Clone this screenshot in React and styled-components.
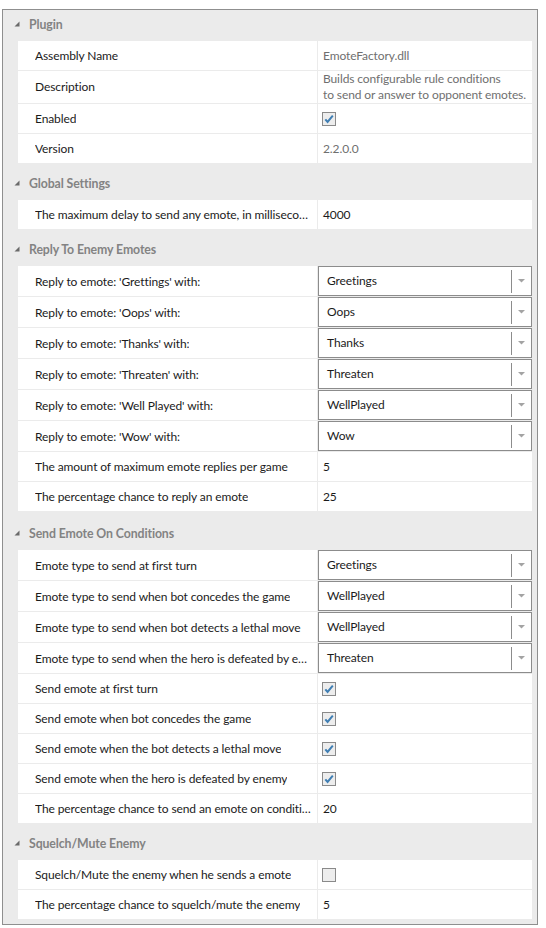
import React from "react";
import styled, { createGlobalStyle } from "styled-components";

const Global = createGlobalStyle`
  html, body { margin: 0; padding: 0; background: #ffffff; }
  body {
    font-family: "Segoe UI", Lato, "Noto Sans", sans-serif;
    font-size: 12px;
    letter-spacing: -0.1px;
  }
`;

const Panel = styled.div`
  box-sizing: border-box;
  margin: 9px 0 0 2px;
  width: 536px;
  border: 1px solid #8f8f8f;
  background: #ebebeb;
  padding-bottom: 5px;
  display: flex;
  flex-direction: column;
`;

const Category = styled.section`
  display: flex;
  flex-direction: column;
  margin-top: ${(p) => p.$gap}px;
`;

const Header = styled.div`
  height: 31px;
  display: flex;
  align-items: center;
  padding-bottom: 3px;
  box-sizing: border-box;
  padding-left: 11px;
  gap: 9px;
  color: #838383;
  font-weight: bold;
  font-size: 12.3px;
`;

const Items = styled.div`
  margin-left: 15px;
  width: 514px;
  display: flex;
  flex-direction: column;
  gap: 1px;
  background: #ebebeb;
`;

const Row = styled.div`
  display: grid;
  grid-template-columns: 299px 214px;
  column-gap: 1px;
  height: ${(p) => p.$h}px;
  background: #ebebeb;
`;

const NameCell = styled.div`
  background: #ffffff;
  color: #1b1b1b;
  padding: 0 4px 0 17px;
  display: flex;
  align-items: ${(p) => (p.$top ? "flex-start" : "center")};
  padding-top: ${(p) => (p.$top ? "8px" : "0")};
  box-sizing: border-box;
  min-width: 0;
  overflow: hidden;
`;

const NameText = styled.span`
  white-space: nowrap;
  overflow: hidden;
  text-overflow: ellipsis;
`;

const ValueCell = styled.div`
  background: #ffffff;
  color: ${(p) => (p.$readOnly ? "#6f6f6f" : "#1b1b1b")};
  padding-left: ${(p) => p.$pad}px;
  display: flex;
  flex-direction: column;
  justify-content: ${(p) => (p.$top ? "flex-start" : "center")};
  line-height: 16px;
  box-sizing: border-box;
  min-width: 0;
  white-space: nowrap;
`;

const Combo = styled.div`
  box-sizing: border-box;
  height: 100%;
  width: 100%;
  border: 1px solid #8c8c8c;
  display: flex;
  align-items: center;
  background: #ffffff;
  color: #1b1b1b;
`;

const ComboText = styled.span`
  flex: 1;
  padding-left: 8px;
`;

const ComboDivider = styled.div`
  align-self: stretch;
  margin: 3px 0 2px;
  width: 1px;
  background: #8c8c8c;
`;

const ComboArrow = styled.div`
  width: 19px;
  display: flex;
  justify-content: center;
  align-items: center;
`;

const Box = styled.div`
  box-sizing: border-box;
  width: 14px;
  height: 14px;
  border: 1px solid #8a8a8a;
  background: #ededed;
  display: flex;
  align-items: center;
  justify-content: center;
`;

const Expander = () => (
  <svg width="6" height="6" viewBox="0 0 6 6">
    <polygon points="5.5,0.5 5.5,5.5 0.5,5.5" fill="#6a6a6a" />
  </svg>
);

const Arrow = () => (
  <svg width="7" height="4" viewBox="0 0 7 4">
    <polygon points="0,0 7,0 3.5,3.5" fill="#a3a3a3" />
  </svg>
);

const Check = ({ checked }) => (
  <Box>
    {checked && (
      <svg width="12" height="12" viewBox="0 0 12 12">
        <polyline
          points="2.3,6.3 4.6,9 9.8,2.6"
          fill="none"
          stroke="#3f7eb3"
          strokeWidth="2"
        />
      </svg>
    )}
  </Box>
);

const data = [
  {
    title: "Plugin",
    gap: 0,
    items: [
      { name: "Assembly Name", type: "text", value: "EmoteFactory.dll", ro: true },
      {
        name: "Description",
        type: "multi",
        value: ["Builds configurable rule conditions", "to send or answer to opponent emotes."],
        ro: true,
      },
      { name: "Enabled", type: "check", value: true },
      { name: "Version", type: "text", value: "2.2.0.0", ro: true },
    ],
  },
  {
    title: "Global Settings",
    gap: 6,
    items: [
      { name: "The maximum delay to send any emote, in milliseconds", type: "text", value: "4000" },
    ],
  },
  {
    title: "Reply To Enemy Emotes",
    gap: 6,
    items: [
      { name: "Reply to emote: 'Grettings' with:", type: "combo", value: "Greetings" },
      { name: "Reply to emote: 'Oops' with:", type: "combo", value: "Oops" },
      { name: "Reply to emote: 'Thanks' with:", type: "combo", value: "Thanks" },
      { name: "Reply to emote: 'Threaten' with:", type: "combo", value: "Threaten" },
      { name: "Reply to emote: 'Well Played' with:", type: "combo", value: "WellPlayed" },
      { name: "Reply to emote: 'Wow' with:", type: "combo", value: "Wow" },
      { name: "The amount of maximum emote replies per game", type: "text", value: "5" },
      { name: "The percentage chance to reply an emote", type: "text", value: "25" },
    ],
  },
  {
    title: "Send Emote On Conditions",
    gap: 8,
    items: [
      { name: "Emote type to send at first turn", type: "combo", value: "Greetings" },
      { name: "Emote type to send when bot concedes the game", type: "combo", value: "WellPlayed" },
      { name: "Emote type to send when bot detects a lethal move", type: "combo", value: "WellPlayed" },
      { name: "Emote type to send when the hero is defeated by enemy", type: "combo", value: "Threaten" },
      { name: "Send emote at first turn", type: "check", value: true },
      { name: "Send emote when bot concedes the game", type: "check", value: true },
      { name: "Send emote when the bot detects a lethal move", type: "check", value: true },
      { name: "Send emote when the hero is defeated by enemy", type: "check", value: true },
      { name: "The percentage chance to send an emote on conditions", type: "text", value: "20" },
    ],
  },
  {
    title: "Squelch/Mute Enemy",
    gap: 6,
    items: [
      { name: "Squelch/Mute the enemy when he sends a emote", type: "check", value: false },
      { name: "The percentage chance to squelch/mute the enemy", type: "text", value: "5" },
    ],
  },
];

const heights = { text: 29, multi: 32, check: 29, combo: 30 };

const Value = ({ item }) => {
  if (item.type === "combo")
    return (
      <ValueCell $pad={0}>
        <Combo>
          <ComboText>{item.value}</ComboText>
          <ComboDivider />
          <ComboArrow>
            <Arrow />
          </ComboArrow>
        </Combo>
      </ValueCell>
    );
  if (item.type === "check")
    return (
      <ValueCell $pad={4}>
        <Check checked={item.value} />
      </ValueCell>
    );
  if (item.type === "multi")
    return (
      <ValueCell $pad={5} $readOnly $top>
        {item.value.map((l) => (
          <span key={l}>{l}</span>
        ))}
      </ValueCell>
    );
  return (
    <ValueCell $pad={5} $readOnly={item.ro}>
      <span>{item.value}</span>
    </ValueCell>
  );
};

export default function App() {
  return (
    <>
      <Global />
      <Panel>
        {data.map((cat) => (
          <Category key={cat.title} $gap={cat.gap}>
            <Header>
              <Expander />
              <span>{cat.title}</span>
            </Header>
            <Items>
              {cat.items.map((item) => (
                <Row key={item.name} $h={heights[item.type]}>
                  <NameCell $top={item.type === "multi"}>
                    <NameText>{item.name}</NameText>
                  </NameCell>
                  <Value item={item} />
                </Row>
              ))}
            </Items>
          </Category>
        ))}
      </Panel>
    </>
  );
}
